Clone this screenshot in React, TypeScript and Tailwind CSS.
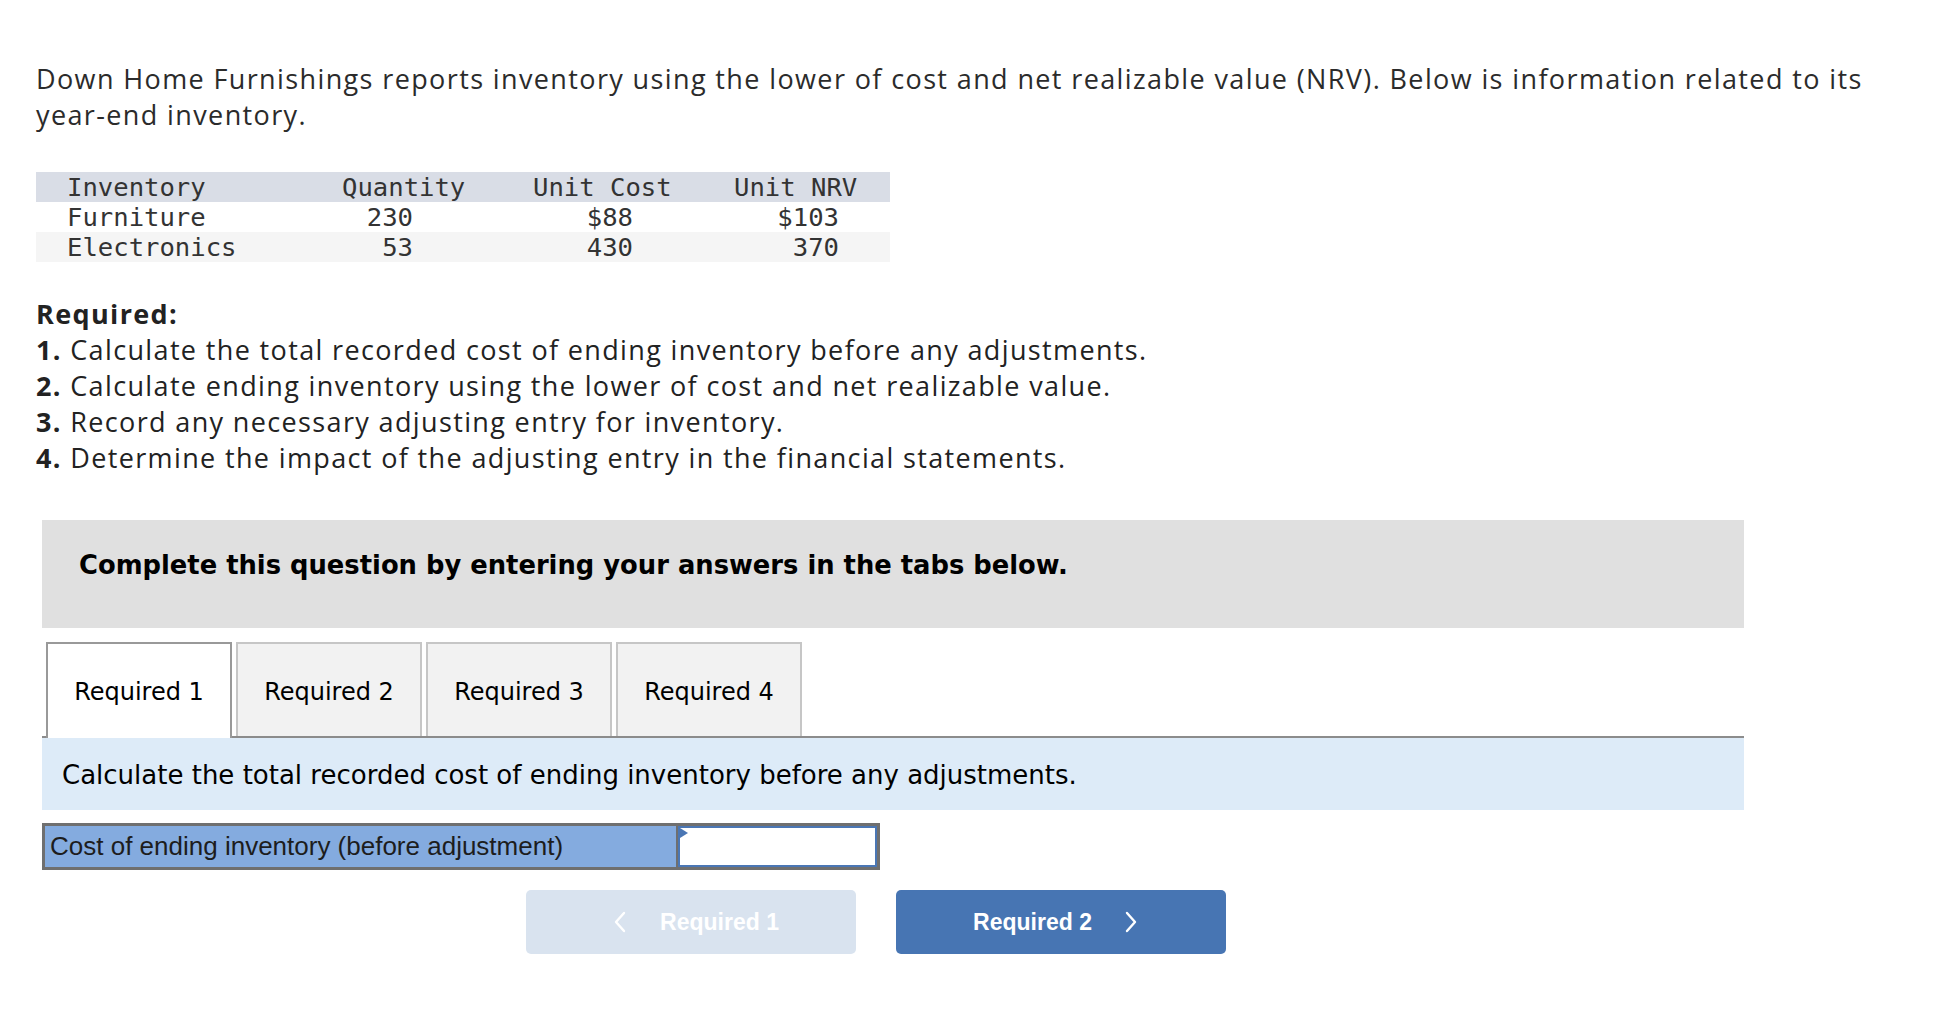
const rows = [
  { name: "Furniture", qty: "230", cost: "$88", nrv: "$103" },
  { name: "Electronics", qty: "53", cost: "430", nrv: "370" },
];

const tabs = ["Required 1", "Required 2", "Required 3", "Required 4"];

function Chevron({ dir }: { dir: "left" | "right" }) {
  return (
    <svg width="12" height="22" viewBox="0 0 12 22" fill="none" stroke="currentColor" strokeWidth="2.4" strokeLinecap="round" strokeLinejoin="round">
      {dir === "left" ? <polyline points="10,2 2,11 10,20" /> : <polyline points="2,2 10,11 2,20" />}
    </svg>
  );
}

export default function App() {
  return (
    <div className="min-h-screen bg-white pl-[36px] pr-[36px] pt-[61px] text-[#222]">
      {/* Intro */}
      <p className="font-['Open_Sans',sans-serif] text-[27px] leading-[36px] tracking-[1.38px] text-[#2b2b2b]">
        Down Home Furnishings reports inventory using the lower of cost and net realizable value (NRV). Below is
        information related to its year-end inventory.
      </p>

      {/* Inventory table */}
      <div className="mt-[39px] w-[854px] font-['DejaVu_Sans_Mono',monospace] text-[25.6px] leading-[30px] text-[#333]">
        <div className="grid h-[30px] grid-cols-[306px_191px_201px_156px] bg-[#d9dde6]">
          <div className="pl-[31px]">Inventory</div>
          <div>Quantity</div>
          <div>Unit Cost</div>
          <div>Unit NRV</div>
        </div>
        {rows.map((r, i) => (
          <div
            key={r.name}
            className={`grid h-[30px] grid-cols-[306px_191px_201px_156px] ${i === 1 ? "bg-[#f5f5f5]" : "bg-white"}`}
          >
            <div className="pl-[31px]">{r.name}</div>
            <div className="pr-[120px] text-right">{r.qty}</div>
            <div className="pr-[101px] text-right">{r.cost}</div>
            <div className="pr-[51px] text-right">{r.nrv}</div>
          </div>
        ))}
      </div>

      {/* Required list */}
      <div className="mt-[34px] font-['Open_Sans',sans-serif] text-[27px] leading-[36px] tracking-[1.36px] text-[#222]">
        <div className="font-bold">Required:</div>
        <div><span className="font-bold">1.</span> Calculate the total recorded cost of ending inventory before any adjustments.</div>
        <div><span className="font-bold">2.</span> Calculate ending inventory using the lower of cost and net realizable value.</div>
        <div><span className="font-bold">3.</span> Record any necessary adjusting entry for inventory.</div>
        <div><span className="font-bold">4.</span> Determine the impact of the adjusting entry in the financial statements.</div>
      </div>

      {/* Question area */}
      <div className="ml-[6px] mt-[44px] w-[1702px] font-['DejaVu_Sans',Verdana,sans-serif]">
        <div className="h-[108px] bg-[#e0e0e0] pl-[37px] pt-[30px] text-[25.8px] font-bold leading-[30px] text-black">
          Complete this question by entering your answers in the tabs below.
        </div>

        {/* Tabs */}
        <div className="mt-[14px] flex gap-[4px] border-b-2 border-[#8c8c8c] pl-[4px]">
          {tabs.map((t, i) => (
            <div
              key={t}
              className={
                i === 0
                  ? "-mb-[2px] flex h-[96px] w-[186px] items-center justify-center border-2 border-b-0 border-[#999] bg-white pt-[2px] text-[24px] text-black"
                  : "flex h-[94px] w-[186px] items-center justify-center border-2 border-b-0 border-[#c6c6c6] bg-[#f2f2f2] pt-[3px] text-[24px] text-black"
              }
            >
              {t}
            </div>
          ))}
        </div>

        <div className="flex h-[72px] items-center bg-[#ddebf8] pl-[20px] pt-[2px] text-[26px] text-black">
          Calculate the total recorded cost of ending inventory before any adjustments.
        </div>

        {/* Answer row */}
        <div className="mt-[13px] flex h-[47px] w-[838px] border-[3px] border-[#6f6f6f] font-['Liberation_Sans',Arial,sans-serif]">
          <div className="flex w-[633px] items-center border-r-[2px] border-[#6f6f6f] bg-[#84abdf] pl-[5px] text-[26px] text-[#1d1d1d]">
            Cost of ending inventory (before adjustment)
          </div>
          <div className="relative flex-1 border-2 border-[#4a76b4] bg-white">
            <div className="absolute left-0 top-0 h-0 w-0 border-b-[5px] border-l-[8px] border-t-[5px] border-b-transparent border-l-[#4a76b4] border-t-transparent" />
          </div>
        </div>

        {/* Navigation */}
        <div className="mt-[20px] flex gap-[40px] pl-[484px] font-['Liberation_Sans',Arial,sans-serif]">
          <button className="flex h-[64px] w-[330px] items-center justify-center gap-[34px] rounded-[5px] bg-[#d9e3ef] pl-[11px] text-[23px] font-bold text-white">
            <Chevron dir="left" />
            <span>Required 1</span>
          </button>
          <button className="flex h-[64px] w-[330px] items-center justify-center gap-[33px] rounded-[5px] bg-[#4775b3] pr-[12px] text-[23px] font-bold text-white">
            <span>Required 2</span>
            <Chevron dir="right" />
          </button>
        </div>
      </div>
    </div>
  );
}
